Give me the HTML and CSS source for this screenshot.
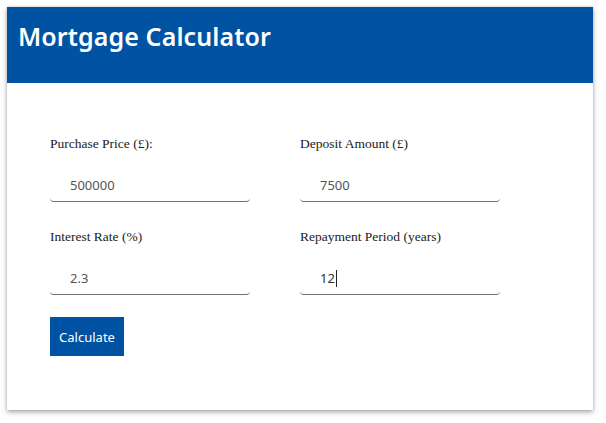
FILE: index.html
```html
<!DOCTYPE html>
<html>
<head>
<meta charset="utf-8">
<link rel="stylesheet" href="styles.css">
</head>
<body>
<div class="card">
  <header class="header">
    <h1 class="title">Mortgage Calculator</h1>
  </header>
  <form class="form">
    <div class="grid">
      <div class="field">
        <label class="label">Purchase Price (£):</label>
        <input class="input" type="text" value="500000">
      </div>
      <div class="field">
        <label class="label">Deposit Amount (£)</label>
        <input class="input" type="text" value="7500">
      </div>
      <div class="field">
        <label class="label">Interest Rate (%)</label>
        <input class="input" type="text" value="2.3">
      </div>
      <div class="field">
        <label class="label">Repayment Period (years)</label>
        <div class="input fake">12<span class="caret"></span></div>
      </div>
    </div>
    <button class="btn" type="button">Calculate</button>
  </form>
</div>
</body>
</html>
```
FILE: styles.css
```css
html, body {
  margin: 0;
  padding: 0;
  background: #ffffff;
}
body {
  padding: 7px 13px 13px 7px;
  min-height: 423px;
  box-sizing: border-box;
}
.card {
  background: #fff;
  box-shadow: 0 2px 5px rgba(0,0,0,0.35), 0 0 2px rgba(0,0,0,0.12);
  height: 403px;
  box-sizing: border-box;
}
.header {
  background: #0052a2;
  height: 76px;
  box-sizing: border-box;
  padding: 13px 11px 0;
}
.title {
  margin: 0;
  color: #fff;
  font-family: "Noto Sans", "Open Sans", sans-serif;
  font-weight: 600;
  font-size: 25px;
  line-height: 32px;
  letter-spacing: 0.1px;
}
.form {
  padding: 53px 43px 0;
}
.grid {
  display: grid;
  grid-template-columns: 200px 200px;
  column-gap: 50px;
  row-gap: 27px;
}
.field {
  display: flex;
  flex-direction: column;
}
.label {
  font-family: "Liberation Serif", serif;
  font-size: 13.5px;
  line-height: 16px;
  color: #222;
  margin-bottom: 17px;
}
.input {
  height: 33px;
  box-sizing: border-box;
  border: none;
  border-bottom: 1px solid #707070;
  border-radius: 0 0 4px 4px;
  padding: 0 20px;
  font-family: "Noto Sans", "Open Sans", sans-serif;
  font-size: 13px;
  color: #555;
  outline: none;
  background: #fff;
  width: 200px;
}
.fake {
  display: flex;
  align-items: center;
  color: #333;
}
.caret {
  display: inline-block;
  width: 1px;
  height: 17px;
  background: #222;
  margin-left: 1px;
}
.btn {
  margin-top: 22px;
  width: 74px;
  height: 39px;
  background: #0052a2;
  color: #fff;
  border: none;
  font-family: "Noto Sans", "Open Sans", sans-serif;
  font-size: 13px;
  padding: 0;
  cursor: pointer;
}
```
